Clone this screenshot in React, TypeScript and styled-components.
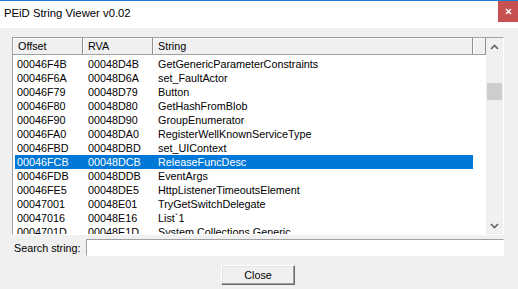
import React from 'react'
import styled, { createGlobalStyle } from 'styled-components'

const GlobalStyle = createGlobalStyle`
  html, body {
    margin: 0;
    padding: 0;
    background: #f0f0f0;
  }
  body {
    font-family: 'Liberation Sans', Arial, sans-serif;
    color: #000;
  }
`

const Window = styled.div`
  width: 518px;
  height: 289px;
  overflow: hidden;
  background: #f0f0f0;
  display: flex;
  flex-direction: column;
`

const TitleBar = styled.div`
  height: 27px;
  border-top: 1px solid #1a7fd4;
  background: #fff;
  display: flex;
  align-items: flex-start;
  justify-content: space-between;
`

const Title = styled.div`
  font-size: 11.3px;
  line-height: 24px;
  padding-left: 4px;
`

const CloseBox = styled.div`
  width: 20px;
  height: 21px;
  background: #c75050;
  display: flex;
  align-items: center;
  justify-content: center;
`

const Body = styled.div`
  padding: 9px 14px 0 12px;
  display: flex;
  flex-direction: column;
`

const ListView = styled.div`
  box-sizing: border-box;
  height: 198px;
  border: 1px solid;
  border-color: #a0a0a0 #fff #fff #a0a0a0;
  background: #fff;
  display: grid;
  grid-template-columns: 1fr 17px;
`

const ListContent = styled.div`
  display: flex;
  flex-direction: column;
  overflow: hidden;
`

const Header = styled.div`
  display: flex;
  height: 16px;
  background: #f0f0f0;
  border-bottom: 1px solid #a0a0a0;
`

const HeaderCell = styled.div<{ $width: number }>`
  box-sizing: border-box;
  width: ${({ $width }) => $width}px;
  flex-shrink: 0;
  padding-left: 5px;
  font-size: 10.8px;
  line-height: 16px;
  border-right: 1px solid #8f8f8f;
  box-shadow: inset 1px 1px 0 #fff;
  white-space: nowrap;
`

const Rows = styled.div`
  padding-top: 2px;
`

const Row = styled.div<{ $selected?: boolean }>`
  display: grid;
  grid-template-columns: 71px 70px 1fr;
  margin-left: 2px;
  width: 458px;
  height: 14px;
  font-size: 10.8px;
  line-height: 14px;
  background: ${({ $selected }) => ($selected ? '#0078d7' : 'transparent')};
  color: ${({ $selected }) => ($selected ? '#fff' : '#000')};
`

const Cell = styled.div`
  padding-left: 2px;
  white-space: nowrap;
  overflow: hidden;
`

const Scrollbar = styled.div`
  background: #f0f0f0;
  display: flex;
  flex-direction: column;
`

const ScrollArrow = styled.div`
  height: 17px;
  display: flex;
  align-items: center;
  justify-content: center;
`

const Track = styled.div`
  flex: 1;
`

const Thumb = styled.div`
  margin: 28px 1px 0;
  height: 17px;
  background: #cdcdcd;
`

const SearchRow = styled.div`
  margin-top: 4px;
  display: flex;
  align-items: center;
`

const SearchLabel = styled.label`
  width: 72px;
  padding-left: 2px;
  font-size: 10.8px;
`

const SearchInput = styled.input`
  box-sizing: border-box;
  width: 419px;
  height: 17px;
  margin: 0;
  padding: 0 3px;
  border: 1px solid;
  border-color: #a0a0a0 #fff #fff #a0a0a0;
  background: #fff;
  font-family: inherit;
  font-size: 10.8px;
  outline: none;
`

const ButtonRow = styled.div`
  margin-top: 9px;
  display: flex;
  justify-content: center;
`

const Button = styled.button`
  box-sizing: border-box;
  width: 74px;
  height: 20px;
  padding: 0;
  border: 1px solid;
  border-color: #fff #696969 #696969 #fff;
  box-shadow: inset -1px -1px 0 #a0a0a0, inset 1px 1px 0 #e3e3e3;
  background: #f0f0f0;
  font-family: inherit;
  font-size: 10.8px;
  color: #000;
`

const rows = [
  ['00046F4B', '00048D4B', 'GetGenericParameterConstraints'],
  ['00046F6A', '00048D6A', 'set_FaultActor'],
  ['00046F79', '00048D79', 'Button'],
  ['00046F80', '00048D80', 'GetHashFromBlob'],
  ['00046F90', '00048D90', 'GroupEnumerator'],
  ['00046FA0', '00048DA0', 'RegisterWellKnownServiceType'],
  ['00046FBD', '00048DBD', 'set_UIContext'],
  ['00046FCB', '00048DCB', 'ReleaseFuncDesc'],
  ['00046FDB', '00048DDB', 'EventArgs'],
  ['00046FE5', '00048DE5', 'HttpListenerTimeoutsElement'],
  ['00047001', '00048E01', 'TryGetSwitchDelegate'],
  ['00047016', '00048E16', 'List`1'],
  ['0004701D', '00048E1D', 'System.Collections.Generic'],
]

const Chevron = ({ up }: { up?: boolean }) => (
  <svg width="9" height="6" viewBox="0 0 9 6">
    <polyline
      points={up ? '1,5 4.5,1.5 8,5' : '1,1 4.5,4.5 8,1'}
      fill="none"
      stroke="#606060"
      strokeWidth="1.6"
    />
  </svg>
)

export default function App() {
  return (
    <Window>
      <GlobalStyle />
      <TitleBar>
        <Title>PEiD String Viewer v0.02</Title>
        <CloseBox>
          <svg width="7" height="7" viewBox="0 0 7 7">
            <path d="M1 1L6 6M6 1L1 6" stroke="#fff" strokeWidth="1.5" />
          </svg>
        </CloseBox>
      </TitleBar>
      <Body>
        <ListView>
          <ListContent>
            <Header>
              <HeaderCell $width={70}>Offset</HeaderCell>
              <HeaderCell $width={70}>RVA</HeaderCell>
              <HeaderCell $width={320}>String</HeaderCell>
              <HeaderCell $width={13} />
            </Header>
            <Rows>
              {rows.map(([offset, rva, str]) => (
                <Row key={offset} $selected={offset === '00046FCB'}>
                  <Cell>{offset}</Cell>
                  <Cell>{rva}</Cell>
                  <Cell>{str}</Cell>
                </Row>
              ))}
            </Rows>
          </ListContent>
          <Scrollbar>
            <ScrollArrow>
              <Chevron up />
            </ScrollArrow>
            <Track>
              <Thumb />
            </Track>
            <ScrollArrow>
              <Chevron />
            </ScrollArrow>
          </Scrollbar>
        </ListView>
        <SearchRow>
          <SearchLabel>Search string:</SearchLabel>
          <SearchInput type="text" />
        </SearchRow>
        <ButtonRow>
          <Button>Close</Button>
        </ButtonRow>
      </Body>
    </Window>
  )
}
